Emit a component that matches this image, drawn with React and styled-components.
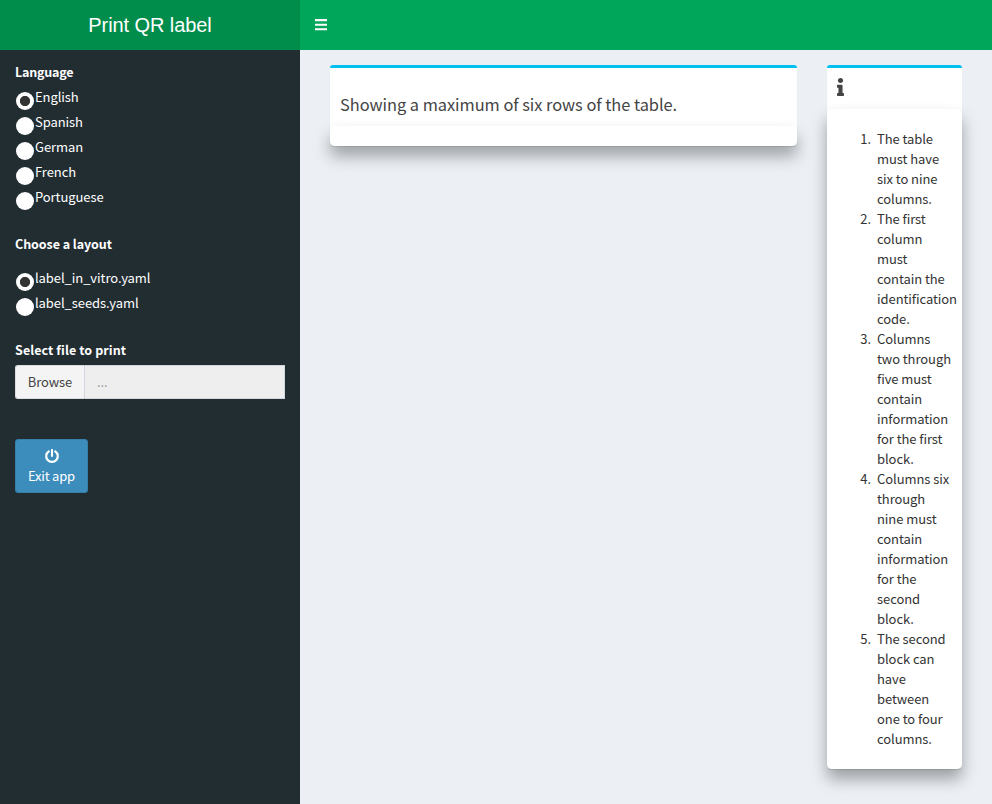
import React, { useState } from "react";
import styled, { createGlobalStyle } from "styled-components";

const GlobalStyle = createGlobalStyle`
  *, *::before, *::after { box-sizing: border-box; }
  body {
    margin: 0;
    background: #ecf0f5;
    color: #333;
    font: 400 13px/20px "Source Sans Pro", "Noto Sans CJK SC", "Noto Sans", sans-serif;
    letter-spacing: -0.07px;
  }
`;

const Page = styled.div`
  display: grid;
  grid-template: 50px 1fr / 300px 1fr;
  height: 804px;
  overflow: hidden;
`;

const Logo = styled.div`
  background: #008d4c;
  color: #fff;
  font: 20px/50px "Liberation Sans", Arial, sans-serif;
  letter-spacing: -0.08px;
  text-align: center;
`;

const Navbar = styled.nav`
  display: flex;
  align-items: center;
  padding-left: 15px;
  background: #00a65a;
`;

const Sidebar = styled.aside`
  display: flex;
  flex-direction: column;
  align-items: flex-start;
  padding: 12px 15px;
  background: #222d32;
  color: #fff;
`;

const FieldLabel = styled.div`
  height: 20px;
  font-size: 12.5px;
  font-weight: 700;
  letter-spacing: ${(p) => p.$tracking}px;
`;

const RadioList = styled.div`
  display: flex;
  flex-direction: column;
  gap: 5px;
  margin: ${(p) => p.$margin};
`;

const RadioRow = styled.label`
  display: flex;
  height: 20px;
  padding-left: 1px;
  white-space: nowrap;
`;

const Dot = styled.input`
  appearance: none;
  width: 18px;
  height: 18px;
  margin: 5px 1px 0 0;
  border-radius: 50%;
  background: #fff;
  &:checked {
    background: radial-gradient(circle, #333 4.7px, #fff 5.5px);
  }
`;

const FileInput = styled.div`
  display: flex;
  width: 270px;
  height: 34px;
  margin: 5px 0 40px;
`;

const Browse = styled.button`
  width: 70px;
  padding: 0;
  border: 1px solid #ddd;
  border-right-color: #d2d6de;
  border-radius: 3px 0 0 3px;
  background: #f4f4f4;
  color: #444;
  font: inherit;
  letter-spacing: -0.1px;
`;

const FileName = styled.div`
  flex: 1;
  padding: 6px 12px;
  border: 1px solid #d2d6de;
  border-left: 0;
  background: #eee;
  color: #999;
`;

const ExitButton = styled.button`
  display: flex;
  flex-direction: column;
  align-items: center;
  width: 73px;
  height: 54px;
  padding: 9px 0 0;
  border: 1px solid #367fa9;
  border-radius: 3px;
  background: #3c8dbc;
  color: #fff;
  font: inherit;
  letter-spacing: -0.2px;
  white-space: nowrap;
  svg { margin-bottom: 3px; }
`;

const Content = styled.main`
  display: flex;
  align-items: flex-start;
  gap: 30px;
  padding: 15px 30px;
`;

const Box = styled.section`
  width: ${(p) => p.$width}px;
  border-top: 3px solid #00c0ef;
  border-radius: 3px;
  background: #fff;
  box-shadow: 0 1px 1px rgba(0, 0, 0, 0.1);
`;

const BoxHeader = styled.header`
  height: ${(p) => p.$height}px;
  padding: 10px;
  color: #444;
`;

const BoxTitle = styled.h4`
  margin: 16px 0 0;
  font-size: 16.4px;
  font-weight: 400;
  line-height: 20px;
  letter-spacing: -0.04px;
  white-space: nowrap;
`;

const BoxBody = styled.div`
  padding: 10px;
  border-radius: 5px;
  background: #fff;
  box-shadow: 0 10px 16px rgba(0, 0, 0, 0.34);
`;

const RuleList = styled.ol`
  margin: 10px 0;
  padding-left: 40px;
  list-style: none;
  counter-reset: rule;
`;

const Rule = styled.li`
  counter-increment: rule;
  &::before {
    content: counter(rule) ".";
    float: left;
    width: 30px;
    margin-left: -36px;
    text-align: right;
  }
`;

const BarsIcon = () => (
  <svg width="12" height="14" viewBox="0 0 12 14" fill="#fff">
    <path d="M0 1.100h12.300v2.100H0zM0 5.700h12.300v2.100H0zM0 10.200h12.300v2H0z" />
  </svg>
);

const PowerIcon = () => (
  <svg width="14" height="14" viewBox="0 0 14 14" fill="none" stroke="#fff" strokeLinecap="round">
    <path d="M3.700 2.400A5.750 5.750 0 1 0 10.300 2.400" strokeWidth="2.200" />
    <path d="M7 1v6" strokeWidth="2.100" />
  </svg>
);

const InfoIcon = () => (
  <svg width="7" height="18" viewBox="0 0 192 512" preserveAspectRatio="none" fill="#444">
    <path d="M20 424.229h20V279.771H20c-11.046 0-20-8.954-20-20V212c0-11.046 8.954-20 20-20h112c11.046 0 20 8.954 20 20v212.229h20c11.046 0 20 8.954 20 20V492c0 11.046-8.954 20-20 20H20c-11.046 0-20-8.954-20-20v-47.771c0-11.046 8.954-20 20-20zM96 0C56.235 0 24 32.235 24 72s32.235 72 72 72 72-32.235 72-72S135.764 0 96 0z" />
  </svg>
);

const LANGUAGES = ["English", "Spanish", "German", "French", "Portuguese"];
const LAYOUTS = ["label_in_vitro.yaml", "label_seeds.yaml"];
const RULES = [
  "The table must have six to nine columns.",
  "The first column must contain the identification code.",
  "Columns two through five must contain information for the first block.",
  "Columns six through nine must contain information for the second block.",
  "The second block can have between one to four columns.",
];

function RadioGroup({ name, options, margin }) {
  const [value, setValue] = useState(options[0]);
  return (
    <RadioList $margin={margin}>
      {options.map((o) => (
        <RadioRow key={o}>
          <Dot type="radio" name={name} checked={value === o} onChange={() => setValue(o)} />
          {o}
        </RadioRow>
      ))}
    </RadioList>
  );
}

export default function App() {
  return (
    <>
      <GlobalStyle />
      <Page>
        <Logo>Print QR label</Logo>
        <Navbar><BarsIcon /></Navbar>
        <Sidebar>
          <FieldLabel $tracking={-0.2}>Language</FieldLabel>
          <RadioGroup name="language" options={LANGUAGES} margin="5px 0 27px" />
          <FieldLabel $tracking={-0.06}>Choose a layout</FieldLabel>
          <RadioGroup name="layout" options={LAYOUTS} margin="14px 0 27px" />
          <FieldLabel $tracking={0.08}>Select file to print</FieldLabel>
          <FileInput>
            <Browse>Browse</Browse>
            <FileName>...</FileName>
          </FileInput>
          <ExitButton><PowerIcon />Exit app</ExitButton>
        </Sidebar>
        <Content>
          <Box $width={467}>
            <BoxHeader $height={58}>
              <BoxTitle>Showing a maximum of six rows of the table.</BoxTitle>
            </BoxHeader>
            <BoxBody />
          </Box>
          <Box $width={135}>
            <BoxHeader $height={41}><InfoIcon /></BoxHeader>
            <BoxBody>
              <RuleList>{RULES.map((r) => <Rule key={r}>{r}</Rule>)}</RuleList>
            </BoxBody>
          </Box>
        </Content>
      </Page>
    </>
  );
}
